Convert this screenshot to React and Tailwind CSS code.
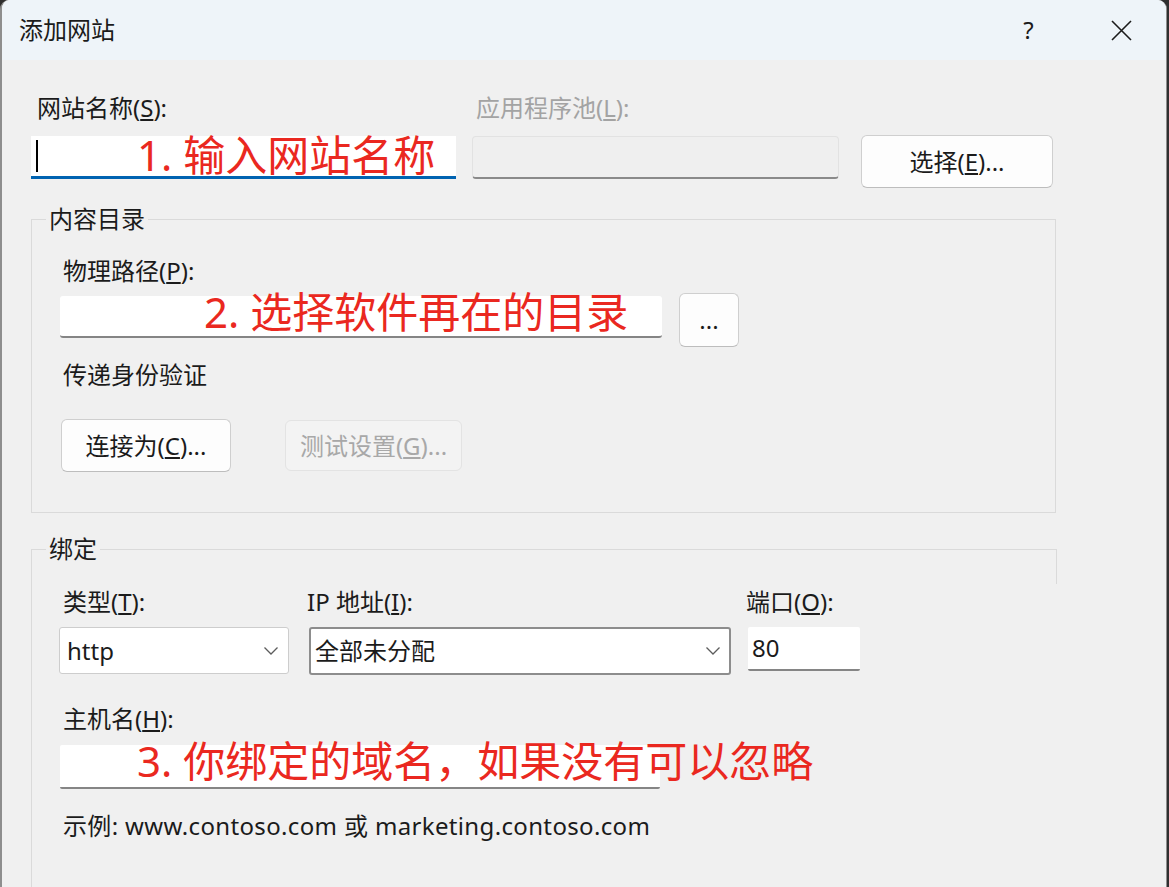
import { ChevronDown } from "lucide-react";

/* ================= SMALL PIECES ================= */
const Label = ({ children, className = "", disabled = false }) => (
  <div
    className={`h-[30px] leading-[30px] text-[24px] whitespace-nowrap ${
      disabled ? "text-[#a3a3a3]" : "text-[#1b1b1b]"
    } ${className}`}
  >
    {children}
  </div>
);

const Note = ({ children, className = "" }) => (
  <span
    className={`whitespace-nowrap text-[42px] leading-[42px] text-[#ea2820] ${className}`}
  >
    {children}
  </span>
);

const Button = ({ children, className = "", disabled = false }) => (
  <div
    className={`flex items-center justify-center rounded-[6px] border text-[24px] whitespace-nowrap ${
      disabled
        ? "border-[#e3e3e3] bg-[#f3f3f3] text-[#a8a8a8]"
        : "border-[#cfcfcf] border-b-[#bdbdbd] bg-[#fdfdfd] text-[#1b1b1b]"
    } ${className}`}
  >
    {children}
  </div>
);

const Chevron = () => (
  <svg width="16" height="10" viewBox="0 0 16 10" className="shrink-0">
    <polyline
      points="1.5,1.5 8,8 14.5,1.5"
      fill="none"
      stroke="#5c5c5c"
      strokeWidth="1.3"
    />
  </svg>
);

export default function App() {
  return (
    <div className="w-[1169px] h-[887px] overflow-hidden bg-[#2f2f2f] font-['Noto_Sans','Noto_Sans_CJK_SC',sans-serif]">
      <div className="w-[1167px] h-[887px] rounded-t-[9px] overflow-hidden border-l-2 border-r border-[#8e8e8e] bg-[#f0f0f0] flex flex-col">
        {/* ================= TITLE BAR ================= */}
        <div className="h-[60px] shrink-0 bg-[#eef4f9] flex items-center">
          <div className="ml-[17px] text-[24px] leading-[30px] text-[#1b1b1b]">
            添加网站
          </div>
          <div className="ml-auto w-[69px] flex justify-center text-[24px] text-[#1b1b1b]">
            ?
          </div>
          <div className="ml-[24px] mr-[10px] w-[69px] flex justify-center">
            <svg width="21" height="21" viewBox="0 0 21 21">
              <path
                d="M1 1 L20 20 M20 1 L1 20"
                stroke="#1b1b1b"
                strokeWidth="1.6"
                fill="none"
              />
            </svg>
          </div>
        </div>

        {/* ================= BODY ================= */}
        <div className="flex-1 pt-[33px]">
          {/* site name / app pool */}
          <div className="flex items-start ml-[29px]">
            <div className="w-[425px]">
              <Label className="ml-[6px]">
                网站名称(<u className="underline-offset-2">S</u>):
              </Label>
              <div className="mt-[13px] h-[43px] bg-white border-b-[3px] border-[#0063b1] flex items-center">
                <div className="ml-[5px] w-[2px] h-[32px] bg-black" />
                <Note className="ml-[99px] -mt-[2px]">1. 输入网站名称</Note>
              </div>
            </div>
            <div className="ml-[16px] w-[367px]">
              <Label disabled className="ml-[4px]">
                应用程序池(<u className="underline-offset-2">L</u>):
              </Label>
              <div className="mt-[13px] h-[43px] rounded-[4px] border border-[#e2e2e2] border-b-2 border-b-[#8a8a8a] bg-[#efefef]" />
            </div>
            <Button className="ml-[22px] mt-[42px] w-[192px] h-[53px]">
              选择(<u className="underline-offset-2">E</u>)...
            </Button>
          </div>

          {/* ================= CONTENT DIRECTORY ================= */}
          <div className="relative mt-[31px] ml-[29px] w-[1025px] h-[294px] border border-[#dadada] pt-[36px]">
            <div className="absolute -top-[16px] left-[14px] px-[3px] bg-[#f0f0f0]">
              <Label>内容目录</Label>
            </div>
            <Label className="ml-[31px]">
              物理路径(<u className="underline-offset-2">P</u>):
            </Label>
            <div className="mt-[10px] flex items-start">
              <div className="ml-[28px] w-[602px] h-[42px] bg-white rounded-[3px] border-b-2 border-[#858585] flex items-center">
                <Note className="ml-[144px] -mt-[8px]">2. 选择软件再在的目录</Note>
              </div>
              <Button className="ml-[17px] -mt-[3px] w-[60px] h-[54px] text-[18px]">
                ...
              </Button>
            </div>
            <Label className="ml-[31px] mt-[13px]">传递身份验证</Label>
            <div className="mt-[29px] flex items-start">
              <Button className="ml-[29px] w-[170px] h-[53px]">
                连接为(<u className="underline-offset-2">C</u>)...
              </Button>
              <Button disabled className="ml-[54px] mt-[1px] w-[177px] h-[51px]">
                测试设置(<u className="underline-offset-2">G</u>)...
              </Button>
            </div>
          </div>

          {/* ================= BINDING ================= */}
          <div className="relative mt-[36px] ml-[29px] w-[1025px] h-[400px] border-l border-t border-[#dadada] pt-[37px]">
            <div className="absolute -top-[16px] left-[14px] px-[3px] bg-[#f0f0f0]">
              <Label>绑定</Label>
            </div>
            <div className="absolute -top-[1px] -right-[1px] w-[1px] h-[35px] bg-[#dadada]" />

            <div className="flex items-start">
              <div className="ml-[27px] w-[230px]">
                <Label className="ml-[4px]">
                  类型(<u className="underline-offset-2">T</u>):
                </Label>
                <div className="mt-[10px] h-[47px] bg-white border border-[#cdcdcd] rounded-[3px] flex items-center pl-[7px] pr-[9px]">
                  <span className="text-[24px] text-[#1b1b1b]">http</span>
                  <span className="ml-auto">
                    <Chevron />
                  </span>
                </div>
              </div>
              <div className="ml-[20px] w-[422px]">
                <Label className="-ml-[2px]">
                  IP 地址(<u className="underline-offset-2">I</u>):
                </Label>
                <div className="mt-[10px] h-[48px] bg-white border-2 border-[#8d8d8d] rounded-[3px] flex items-center pl-[4px] pr-[8px]">
                  <span className="text-[24px] text-[#1b1b1b]">全部未分配</span>
                  <span className="ml-auto">
                    <Chevron />
                  </span>
                </div>
              </div>
              <div className="ml-[17px] w-[112px]">
                <Label className="-ml-[2px]">
                  端口(<u className="underline-offset-2">O</u>):
                </Label>
                <div className="mt-[10px] h-[44px] bg-white border-b-2 border-[#858585] rounded-[2px] flex items-center pl-[4px]">
                  <span className="text-[24px] text-[#1b1b1b]">80</span>
                </div>
              </div>
            </div>

            <Label className="ml-[31px] mt-[29px]">
              主机名(<u className="underline-offset-2">H</u>):
            </Label>
            <div className="mt-[11px] ml-[28px] w-[600px] h-[44px] bg-white rounded-[2px] border-b-2 border-[#858585] flex items-center">
              <Note className="ml-[77px] -mt-[10px]">3. 你绑定的域名，如果没有可以忽略</Note>
            </div>
            <Label className="ml-[31px] mt-[22px] tracking-[0.35px]">
              示例: www.contoso.com 或 marketing.contoso.com
            </Label>
          </div>
        </div>
      </div>
    </div>
  );
}
